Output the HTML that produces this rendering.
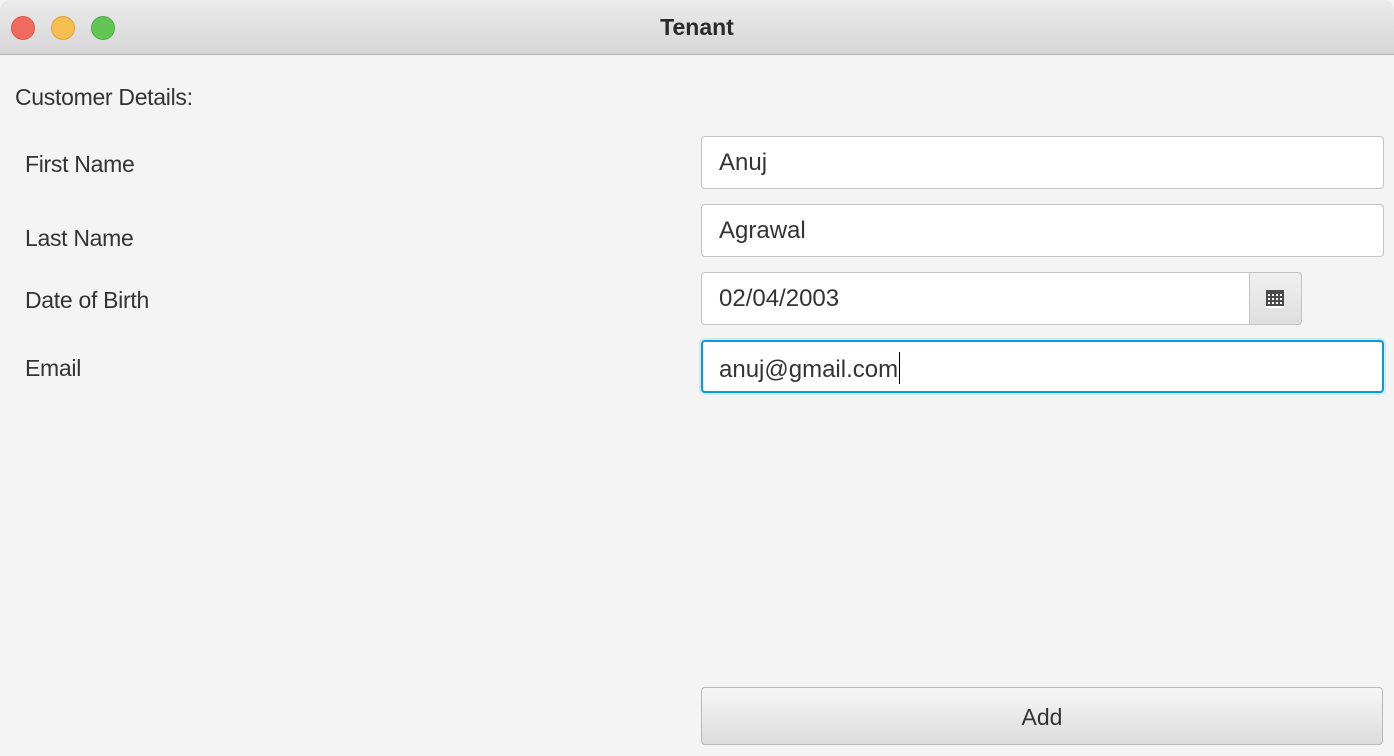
<!DOCTYPE html>
<html><head><style>
body{margin:0;width:1394px;height:756px;background:#f4f4f4;font-family:"Liberation Sans",sans-serif;position:relative;overflow:hidden;color:#333}
.title{position:absolute;left:0;top:0;width:1394px;height:54px;background:linear-gradient(#ebebeb,#d6d6d6);border-bottom:1px solid #b5b5b5;border-radius:10px 10px 0 0}
.title span{position:absolute;left:0;right:0;top:14px;text-align:center;font-weight:bold;font-size:23px;color:#2a2a2a}
.dot{position:absolute;top:16px;width:22px;height:22px;border-radius:50%}
.lbl{position:absolute;font-size:23px;color:#333;letter-spacing:-0.3px}
.f{position:absolute;left:701px;width:683px;height:53px;background:#fff;border:1px solid #c3c3c3;border-radius:4px;box-sizing:border-box;font-size:24px;padding:12px 0 0 17px;color:#333}
</style></head><body>
<div class="title"><div class="dot" style="left:11px;background:#ef6b60;border:1px solid #d75a50"></div><div class="dot" style="left:51px;background:#f6be4f;border:1px solid #dca33a"></div><div class="dot" style="left:91px;background:#62c655;border:1px solid #50ab44"></div><span>Tenant</span></div>
<div class="lbl" style="left:15px;top:84px">Customer Details:</div>
<div class="lbl" style="left:25px;top:151px">First Name</div>
<div class="lbl" style="left:25px;top:225px">Last Name</div>
<div class="lbl" style="left:25px;top:287px">Date of Birth</div>
<div class="lbl" style="left:25px;top:355px">Email</div>
<div class="f" style="top:136px">Anuj</div>
<div class="f" style="top:204px">Agrawal</div>
<div class="f" style="top:272px;width:580px">02/04/2003</div>
<div style="position:absolute;left:1249px;top:272px;width:53px;height:53px;box-sizing:border-box;border:1px solid #c3c3c3;border-radius:0 4px 4px 0;background:linear-gradient(#f0f0f0,#dedede)">
<svg style="position:absolute;left:16px;top:17px" width="18" height="18" viewBox="0 0 18 18"><rect x="0" y="0" width="18" height="17" fill="#4a4a4a"/><rect x="0" y="16" width="18" height="2" fill="#fff"/><g fill="#fff"><rect x="2" y="4" width="2" height="2"/><rect x="6" y="4" width="2" height="2"/><rect x="10" y="4" width="2" height="2"/><rect x="14" y="4" width="2" height="2"/><rect x="2" y="8" width="2" height="2"/><rect x="6" y="8" width="2" height="2"/><rect x="10" y="8" width="2" height="2"/><rect x="14" y="8" width="2" height="2"/><rect x="2" y="12" width="2" height="2"/><rect x="6" y="12" width="2" height="2"/><rect x="10" y="12" width="2" height="2"/><rect x="14" y="12" width="2" height="2"/></g></svg></div>
<div class="f" style="top:340px;border:2px solid #0a9ad6;box-shadow:0 0 0 2px #cfe9f6;padding:10px 0 0 16px">anuj@gmail.com<span style="border-left:1.5px solid #000;margin-left:1px;height:32px;display:inline-block;vertical-align:-7px"></span></div>
<div style="position:absolute;left:701px;top:687px;width:682px;height:58px;box-sizing:border-box;border:1px solid #b8b8b8;border-radius:4px;background:linear-gradient(#f6f6f6,#dcdcdc);text-align:center;font-size:23px;line-height:58px;color:#333">Add</div>
</body></html>
